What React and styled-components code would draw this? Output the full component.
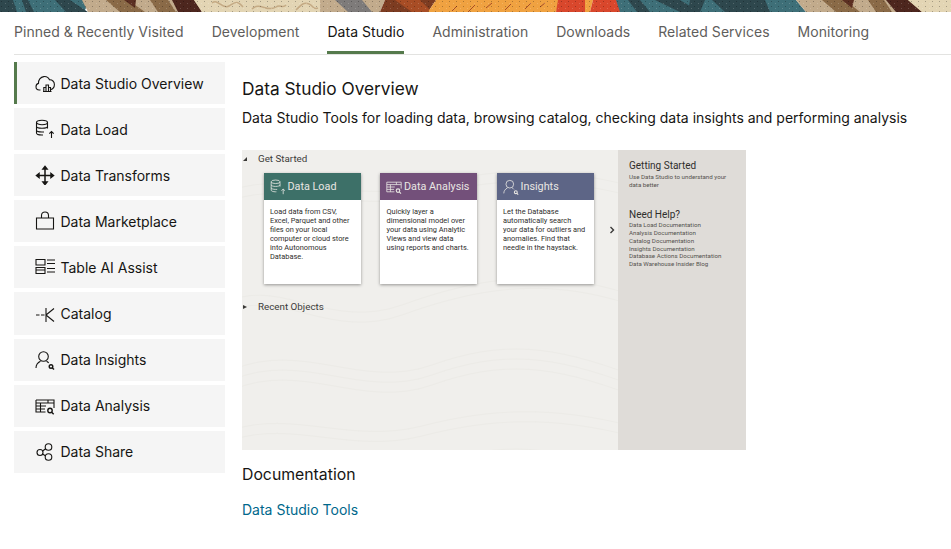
import React from "react";
import styled, { createGlobalStyle } from "styled-components";

const Global = createGlobalStyle`
  html, body { margin: 0; padding: 0; background: #fff; }
  body { font-family: Inter, "Liberation Sans", sans-serif; color: #161513; }
  * { box-sizing: border-box; }
`;
const Page = styled.div`width: 951px; height: 549px; overflow: hidden; background: #fff;`;
const Banner = styled.svg`display: block; width: 951px; height: 12px;`;
const Tabs = styled.nav`display: flex; gap: 28px; height: 43px; margin-left: 14px; border-bottom: 1px solid #e3e3e1;`;
const Tab = styled.div`
  height: 42px; padding-top: 11px; font-size: 14px; line-height: 17px; letter-spacing: 0.035px; white-space: nowrap;
  color: ${p => (p.$active ? "#161513" : "#5f5e5c")};
  border-bottom: 3px solid ${p => (p.$active ? "#557a4c" : "transparent")};
`;
const Body = styled.div`display: flex; padding: 7px 0 0 14px; gap: 17px;`;
const Side = styled.aside`display: flex; flex-direction: column; gap: 4px; width: 211px; flex: none;`;
const Item = styled.div`
  display: flex; align-items: center; height: 42.1px; padding-left: ${p => (p.$active ? "18px" : "21px")};
  gap: 5.500px; background: #f5f5f5; font-size: 14px; color: #161513;
  border-left: ${p => (p.$active ? "3px solid #557a4c" : "0")};
`;
const IconBox = styled.svg`width: 20px; height: 20px; flex: none; fill: none; stroke: #161513; stroke-width: 1.1;`;
const Main = styled.main`display: flex; flex-direction: column; padding-top: 16px; width: 680px;`;
const H1 = styled.h1`margin: 0; font-size: 17.3px; line-height: 22px; font-weight: 400;`;
const Lead = styled.p`margin: 8px 0 0; font-size: 14px; line-height: 20px; white-space: nowrap;`;
const Shot = styled.div`display: flex; width: 504px; height: 300px; margin-top: 22px; background: #f0efec; font-family: Roboto, "Liberation Sans", sans-serif;`;
const ShotMain = styled.div`width: 376px; flex: none; display: flex; flex-direction: column; padding-top: 3px; position: relative;`;
const Contours = styled.svg`position: absolute; inset: 0; width: 100%; height: 100%; fill: none; stroke: #ecebe7; stroke-width: 1;`;
const Disclosure = styled.div`position: relative; display: flex; align-items: center; gap: 11px; font-size: 9.800px; line-height: 12px; color: #3d3c3a; padding-left: 1px;`;
const Tri = styled.span`width: 0; height: 0; border-style: solid; border-width: ${p => (p.$open ? "0 0 4px 4px" : "2.5px 0 2.5px 4px")}; border-color: ${p => (p.$open ? "transparent transparent #3a3937 transparent" : "transparent transparent transparent #3a3937")};`;
const Cards = styled.div`position: relative; display: flex; gap: 19.500px; margin: 8px 0 0 21.500px; align-items: center;`;
const Card = styled.div`width: 97px; height: 111px; background: #fff; box-shadow: 0 1px 3px rgba(0,0,0,.38); flex: none;`;
const CardHead = styled.div`height: 27px; display: flex; align-items: center; gap: 2px; padding-left: 6px; color: #e9e7e3; background: ${p => p.$bg}; font-size: 10.800px; white-space: nowrap;`;
const CardIcon = styled.svg`width: 16px; height: 16px; flex: none; fill: none; stroke: #e9e7e3; stroke-width: 1;`;
const CardBody = styled.div`padding: 7px 7px 0 6.500px; font-size: 7.400px; line-height: 9px; color: #2f2e2c;`;
const Chevron = styled.svg`width: 6px; height: 8px; margin: 3px 0 0 -4.500px; fill: none; stroke: #3a3937; stroke-width: 1.4;`;
const Recent = styled(Disclosure)`margin-top: 17px;`;
const ShotSide = styled.div`flex: 1; background: #dfdcd8; padding: 10px 0 0 11px; color: #3a3937;`;
const SideTitle = styled.div`font-size: 10px; line-height: 12px; margin-top: ${p => p.$mt || 0}; color: #2f2e2c;`;
const SideText = styled.div`font-size: 6.200px; line-height: 7.700px; color: #55534f; margin-top: ${p => p.$mt || "2px"};`;
const H2 = styled.h2`margin: 15px 0 0; font-size: 15.800px; line-height: 20px; font-weight: 400;`;
const DocLink = styled.a`margin-top: 15px; font-size: 14px; line-height: 20px; color: #00688c;`;

const LoadIcon = () => <><ellipse cx="7" cy="3.500" rx="5.500" ry="2.200" /><path d="M1.500 3.500v10.500c0 1.200 2.500 2 5.500 2h1M12.500 3.500v6M1.500 7.300c0 1.200 2.500 2 5.500 2s5.500-.8 5.500-2M1.500 11c0 1.200 2.500 2 5.500 2h2M16.500 19v-6.500m-2.200 2.200 2.200-2.200 2.200 2.200" /></>;
const AnalysisIcon = () => <><path d="M1 4h18v8M1 4v12h9.500M1 7h18M1 10h10M1 13h9M5.500 7v9M13 4v3" /><circle cx="15" cy="14.500" r="2.200" strokeWidth="1.400" /><path d="m16.700 16.200 2 2" strokeWidth="1.400" /></>;
const InsightIcon = () => <><circle cx="8.500" cy="6.500" r="4.800" /><path d="M1 18c0-3 1.800-5.500 4.500-6.800M11.500 11.200c1 .5 1.600 1 2.200 1.800" /><circle cx="16" cy="16.500" r="1.800" strokeWidth="1.400" /><path d="m17.400 17.900 1.600 1.600" strokeWidth="1.400" /></>;

const nav = [
  ["Data Studio Overview", <><path d="M5.500 17H4.200C2.300 17 1 15.500 1 13.800c0-1.700 1-3 2.500-3.400-.3-3.500 2-6.400 5.300-6.800 2.500-.3 4.700 1 5.700 3.200 2.700-.2 4.900 1.800 4.900 4.700 0 2.500-1.500 4.500-3.900 5.200" /><path d="M8 18.500h8.500M8.800 18v-3.500h2.200V18M11 18v-6h2.500v6M13.500 18v-3.500h2V18" /></>],
  ["Data Load", <LoadIcon />],
  ["Data Transforms", <path strokeWidth="1.500" fill="#161513" d="M1.500 10.500h17M10 1.500v18M1.500 10.500l2.500-2v4zM18.500 10.500l-2.500-2v4zM10 1.500 8 4h4zM10 19.500 8 17h4z" />],
  ["Data Marketplace", <path d="M1.500 7h17v11h-17zM6.500 7V4.500C6.500 2.500 8 1 10 1s3.500 1.500 3.500 3.500V7" />],
  ["Table AI Assist", <path d="M1 2.500h9v5.500H1zM1 10.500h9v6H1zM1 13h9M12 3h8M12 6.500h8M12 11.500h8M12 15h8" />],
  ["Catalog", <path d="M1 11h3.500M6 11h3.500M11 4v14M11 11l8-6.500M11 11l8 6.500" />],
  ["Data Insights", <InsightIcon />],
  ["Data Analysis", <AnalysisIcon />],
  ["Data Share", <><circle cx="5" cy="10.500" r="3" /><circle cx="13.500" cy="5" r="3.300" /><circle cx="13.500" cy="15" r="3.300" /><path d="m7.600 9 3.100-2.200M7.600 12l3.100 2" /></>],
];
const tabs = ["Pinned & Recently Visited", "Development", "Data Studio", "Administration", "Downloads", "Related Services", "Monitoring"];
const shapes = [
  ["#3e6f78", "0,0 90,0 84,12 0,12"],
  ["#2e474d", "0,0 13,0 17,12 0,12"],
  ["#2e474d", "22,0 28,0 34,12 26,12"],
  ["#2e474d", "55,0 70,0 88,12 66,12"],
  ["#c2ab8c", "82,0 206,0 200,12 88,12"],
  ["#8a6a47", "106,0 128,0 145,12 120,12"],
  ["#5b2f22", "124,0 136,0 135,8"],
  ["#8a6a47", "150,0 168,0 176,12 158,12"],
  ["#4d261e", "172,0 194,0 202,12 178,12"],
  ["#e3d5b4", "194,0 322,0 322,12 202,12"],
  ["#c2ab8c", "320,0 385,0 380,12 320,12"],
  ["#7e7b7a", "335,0 362,0 372,12 348,12"],
  ["#7d3c21", "385,0 436,0 428,12 380,12"],
  ["#a84d25", "395,0 420,0 432,12 412,12"],
  ["#f0a241", "436,0 560,0 556,12 428,12"],
  ["#d9472c", "558,0 585,0 585,12 556,12"],
  ["#f0a241", "585,0 593,0 590,12 585,12"],
  ["#d9472c", "593,0 622,0 620,12 590,12"],
  ["#3e6f78", "616,0 796,0 806,12 620,12"],
  ["#2e474d", "628,0 640,0 650,12 637,12"],
  ["#2e474d", "655,0 680,0 700,12 680,12"],
  ["#2e474d", "690,0 705,0 700,12 688,12"],
  ["#2e474d", "712,0 765,0 770,12 725,12"],
  ["#c2ab8c", "796,0 924,0 924,12 806,12"],
  ["#8a6a47", "822,0 845,0 860,12 836,12"],
  ["#5b2f22", "842,0 854,0 852,8"],
  ["#8a6a47", "868,0 884,0 892,12 876,12"],
  ["#4d261e", "886,0 908,0 922,12 896,12"],
  ["#e3d5b4", "908,0 951,0 951,12 922,12"],
];

export default function App() {
  return (
    <Page>
      <Global />
      <Banner viewBox="0 0 951 12">
        <defs>
          <pattern id="speckle" width="7" height="5" patternUnits="userSpaceOnUse">
            <rect x="1" y="1" width="1" height="1" fill="#000" opacity=".28" />
            <rect x="5" y="3" width="1" height="1" fill="#fff" opacity=".18" />
          </pattern>
        </defs>
        {shapes.map(([c, pts]) => <polygon key={pts} fill={c} points={pts} />)}
        <path d="M212 3c6-5 10 7 17 3s8-6 14 1M252 9c8-8 15 4 24-2 4-3 7 2 10-2M296 10c6-6 8-8 13-6s4 6 9 4" stroke="#c4aa84" strokeWidth="1.500" fill="none" />
        <path d="M452 11l5-5M468 12l7-7M486 8l6-5M505 10l6-6M525 9l6-6M540 7l5-4" stroke="#a84d25" strokeWidth="1" fill="none" />
        <rect width="951" height="12" fill="url(#speckle)" />
      </Banner>
      <Tabs>{tabs.map(t => <Tab key={t} $active={t === "Data Studio"}>{t}</Tab>)}</Tabs>
      <Body>
        <Side>
          {nav.map(([label, icon], i) => (
            <Item key={label} $active={i === 0}><IconBox viewBox="0 0 20 20">{icon}</IconBox>{label}</Item>
          ))}
        </Side>
        <Main>
          <H1>Data Studio Overview</H1>
          <Lead>Data Studio Tools for loading data, browsing catalog, checking data insights and performing analysis</Lead>
          <Shot>
            <ShotMain>
              <Contours viewBox="0 0 376 300">
                <path d="M-10 40c60-20 120 14 190-4s130-20 210 0M-10 50c60-20 120 14 190-4s130-20 210 0M-10 280c60-20 120 14 190-4s130-20 210 0M-10 290c60-20 120 14 190-4s130-20 210 0M-10 150c50-20 100 30 170 5s140-40 230-10M-10 160c50-20 100 30 170 5s140-40 230-10M-10 220c70-30 130 20 200-5s120-20 200 10M-10 230c70-30 130 20 200-5s120-20 200 10M-10 240c70-30 130 20 200-5s120-20 200 10M-10 320c70-30 130 20 200-5s120-20 200 10" />
              </Contours>
              <Disclosure><Tri $open />Get Started</Disclosure>
              <Cards>
                <Card>
                  <CardHead $bg="#3d7068"><CardIcon viewBox="0 0 20 20"><LoadIcon /></CardIcon>Data Load</CardHead>
                  <CardBody>Load data from CSV, Excel, Parquet and other files on your local computer or cloud store into Autonomous Database.</CardBody>
                </Card>
                <Card>
                  <CardHead $bg="#73507a"><CardIcon viewBox="0 0 20 20"><AnalysisIcon /></CardIcon>Data Analysis</CardHead>
                  <CardBody>Quickly layer a dimensional model over your data using Analytic Views and view data using reports and charts.</CardBody>
                </Card>
                <Card>
                  <CardHead $bg="#5d6586"><CardIcon viewBox="0 0 20 20"><InsightIcon /></CardIcon>Insights</CardHead>
                  <CardBody>Let the Database automatically search your data for outliers and anomalies. Find that needle in the haystack.</CardBody>
                </Card>
                <Chevron viewBox="0 0 6 8"><path d="m1.500 1 3 3-3 3" /></Chevron>
              </Cards>
              <Recent><Tri />Recent Objects</Recent>
            </ShotMain>
            <ShotSide>
              <SideTitle>Getting Started</SideTitle>
              <SideText>Use Data Studio to understand your<br />data better</SideText>
              <SideTitle $mt="19.500px">Need Help?</SideTitle>
              <SideText $mt="1.500px">Data Load Documentation<br />Analysis Documentation<br />Catalog Documentation<br />Insights Documentation<br />Database Actions Documentation<br />Data Warehouse Insider Blog</SideText>
            </ShotSide>
          </Shot>
          <H2>Documentation</H2>
          <DocLink>Data Studio Tools</DocLink>
        </Main>
      </Body>
    </Page>
  );
}
